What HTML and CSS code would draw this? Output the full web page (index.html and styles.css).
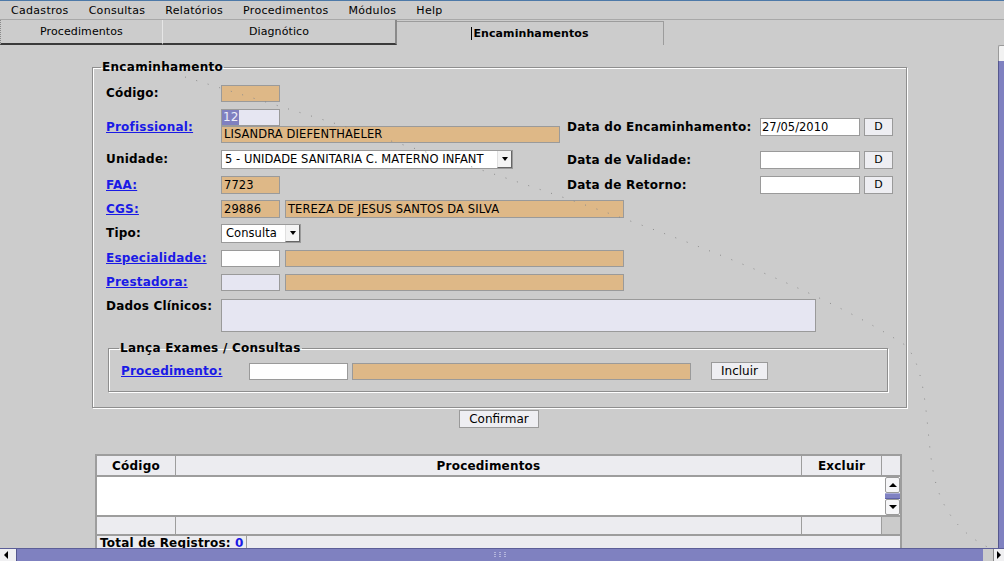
FILE: index.html
```html
<!DOCTYPE html>
<html lang="pt">
<head>
<meta charset="utf-8">
<title>Encaminhamentos</title>
<link rel="stylesheet" href="styles.css">
</head>
<body>
<div class="app">
  <div class="menubar">
    <span class="menu-item">Cadastros</span>
    <span class="menu-item">Consultas</span>
    <span class="menu-item">Relatórios</span>
    <span class="menu-item">Procedimentos</span>
    <span class="menu-item">Módulos</span>
    <span class="menu-item">Help</span>
  </div>
  <div class="tabs">
    <div class="tab tab-1">Procedimentos</div>
    <div class="tab tab-2">Diagnótico</div>
    <div class="tab tab-3"><span class="caret"></span>Encaminhamentos</div>
  </div>
  <div class="viewport">
    <div class="main">
      <fieldset class="group main-group">
        <legend>Encaminhamento</legend>
        <div class="form">
          <div class="row r-codigo">
            <div class="lbl">Código:</div>
            <div class="fld w-s"></div>
          </div>
          <div class="row r-prof">
            <div class="lbl lbl-mid"><a class="lnk" href="#">Profissional:</a></div>
            <div class="left">
              <div class="stack">
                <div class="fld w-s lav nopad"><span class="seltext">12</span></div>
                <div class="fld w-l">LISANDRA DIEFENTHAELER</div>
              </div>
            </div>
            <div class="right mid">
              <div class="rlbl">Data do Encaminhamento:</div>
              <div class="date">27/05/2010</div>
              <button class="btn dbtn">D</button>
            </div>
          </div>
          <div class="row r-unid">
            <div class="lbl lbl-19">Unidade:</div>
            <div class="left">
              <div class="select w-unid">
                <span class="select-text">5 - UNIDADE SANITARIA C. MATERNO INFANT</span>
                <span class="select-arrow"></span>
              </div>
            </div>
            <div class="right mid">
              <div class="rlbl">Data de Validade:</div>
              <div class="date"></div>
              <button class="btn dbtn">D</button>
            </div>
          </div>
          <div class="row r-faa">
            <div class="lbl lbl-18"><a class="lnk" href="#">FAA:</a></div>
            <div class="left">
              <div class="fld w-s h18">7723</div>
            </div>
            <div class="right">
              <div class="rlbl">Data de Retorno:</div>
              <div class="date"></div>
              <button class="btn dbtn">D</button>
            </div>
          </div>
          <div class="row r-cgs">
            <div class="lbl lbl-18"><a class="lnk" href="#">CGS:</a></div>
            <div class="fld w-s h18">29886</div>
            <div class="fld w-l h18 gap5">TEREZA DE JESUS SANTOS DA SILVA</div>
          </div>
          <div class="row r-tipo">
            <div class="lbl lbl-19">Tipo:</div>
            <div class="select w-tipo">
              <span class="select-text">Consulta</span>
              <span class="select-arrow"></span>
            </div>
          </div>
          <div class="row r-esp">
            <div class="lbl"><a class="lnk" href="#">Especialidade:</a></div>
            <div class="fld w-s white"></div>
            <div class="fld w-l gap5"></div>
          </div>
          <div class="row r-prest">
            <div class="lbl"><a class="lnk" href="#">Prestadora:</a></div>
            <div class="fld w-s lav"></div>
            <div class="fld w-l gap5"></div>
          </div>
          <div class="row r-dados">
            <div class="lbl lbl-top">Dados Clínicos:</div>
            <div class="area"></div>
          </div>
          <fieldset class="group sub-group">
            <legend>Lança Exames / Consultas</legend>
            <div class="proc-row">
              <a class="lnk proc-lnk" href="#">Procedimento:</a>
              <div class="fld proc-code white"></div>
              <div class="fld w-l gap4"></div>
              <button class="btn btn-incluir">Incluir</button>
            </div>
          </fieldset>
        </div>
      </fieldset>
      <div class="confirm-row"><button class="btn btn-confirm">Confirmar</button></div>
      <div class="table">
        <div class="t-head">
          <div class="c c1">Código</div>
          <div class="c c2">Procedimentos</div>
          <div class="c c3">Excluir</div>
          <div class="c c4"></div>
        </div>
        <div class="t-body">
          <div class="t-rows"></div>
          <div class="t-vscroll">
            <div class="sb-btn sb-up"></div>
            <div class="sb-thumb"></div>
            <div class="sb-btn sb-down"></div>
          </div>
        </div>
        <div class="t-foot">
          <div class="c c1"></div>
          <div class="c c2"></div>
          <div class="c c3"></div>
          <div class="c c4 blank"></div>
        </div>
        <div class="t-total"><span class="total-text">Total de Registros: <span class="count">0</span></span></div>
      </div>
    </div>
    <div class="vscroll">
      <div class="vs-btn"></div>
      <div class="vs-thumb"></div>
    </div>
  </div>
  <div class="hscroll">
    <div class="hs-btn hs-left"></div>
    <div class="hs-thumb">
      <svg class="grip" width="13" height="6" viewBox="0 0 13 6">
        <rect x="0" y="0" width="2" height="1" fill="#b4b6dc"/><rect x="5" y="0" width="2" height="1" fill="#b4b6dc"/><rect x="10" y="0" width="2" height="1" fill="#b4b6dc"/>
        <rect x="0" y="2" width="2" height="1" fill="#b4b6dc"/><rect x="5" y="2" width="2" height="1" fill="#b4b6dc"/><rect x="10" y="2" width="2" height="1" fill="#b4b6dc"/>
        <rect x="0" y="4" width="2" height="1" fill="#b4b6dc"/><rect x="5" y="4" width="2" height="1" fill="#b4b6dc"/><rect x="10" y="4" width="2" height="1" fill="#b4b6dc"/>
      </svg>
    </div>
    <div class="hs-gap"></div>
    <div class="hs-btn hs-right"></div>
  </div>
</div>
<svg class="artifact" width="1004" height="561" viewBox="0 0 1004 561">
  <path d="M185,77 C420,150 760,250 905,345 C930,370 925,440 935,480 C945,520 970,540 996,551" fill="none" stroke="#8c8c8c" stroke-width="1" stroke-dasharray="1 11"/>
</svg>
</body>
</html>
```

FILE: styles.css
```css
* { box-sizing: border-box; }
html, body { margin: 0; padding: 0; }
body {
  width: 1004px;
  height: 561px;
  overflow: hidden;
  position: relative;
  background: #cccccc;
  color: #000;
  font-family: "DejaVu Sans", "Noto Sans", sans-serif;
  font-size: 11px;
}
.app { display: flex; flex-direction: column; height: 561px; }

/* menu */
.menubar {
  flex: none;
  height: 19px;
  border-top: 1px solid #4d79a8;
  display: flex;
  align-items: center;
  padding-left: 1px;
}
.menu-item { padding: 0 10px; line-height: 17px; letter-spacing: 0.3px; }

/* tabs */
.tabs {
  flex: none;
  height: 26px;
  display: flex;
  border-top: 1px solid #a8a8a8;
}
.tab {
  display: flex;
  align-items: center;
  justify-content: center;
  height: 25px;
  padding-bottom: 1px;
  letter-spacing: 0.1px;
}
.tab-1 {
  width: 163px;
  border-left: 1px dotted #8a8a8a;
  border-right: 1px solid #e6e6e6;
  border-bottom: 2px solid #3a3a3a;
}
.tab-2 {
  width: 234px;
  border-right: 2px solid #8a8a8a;
  border-bottom: 2px solid #3a3a3a;
}
.tab-3 {
  width: 267px;
  margin-top: 1px;
  height: 24px;
  border-top: 1px solid #9c9c9c;
  border-right: 1px solid #9c9c9c;
  font-weight: bold;
}
.caret { display: inline-block; width: 1px; height: 13px; background: #000; margin-right: 1px; }

/* viewport */
.viewport { flex: 1; display: flex; min-height: 0; }
.main { width: 998px; flex: none; overflow: hidden; }

.group {
  margin: 0;
  padding: 0;
  border: 1px solid #8e8e8e;
  box-shadow: inset 1px 1px 0 #ffffff, 1px 1px 0 #ffffff;
  min-width: 0;
}
.group legend {
  font-weight: bold;
  font-size: 12px;
  line-height: 14px;
  padding: 0 1px;
  letter-spacing: 0.3px;
}
.main-group {
  margin: 15px 0 0 92px;
  width: 815px;
  padding-bottom: 15px;
}
.main-group > legend { margin-left: 8px; }

.form {
  padding: 11px 0 0 13px;
  display: flex;
  flex-direction: column;
}
.row { display: flex; align-items: flex-start; margin-bottom: 6px; }
.r-codigo { height: 18px; }
.r-prof { height: 35px; }
.r-unid { height: 20px; }
.r-faa { height: 18px; }
.r-cgs { height: 18px; }
.r-tipo { height: 20px; }
.r-esp { height: 18px; }
.r-prest { height: 19px; }
.r-dados { height: 33px; margin-bottom: 9px; }

.lbl {
  width: 115px;
  flex: none;
  font-weight: bold;
  font-size: 12px;
  line-height: 17px;
  letter-spacing: 0.2px;
  white-space: nowrap;
}
.lbl-18 { line-height: 18px; }
.lbl-19 { line-height: 19px; }
.lbl-mid { align-self: center; padding-top: 1px; }
.lbl-top { line-height: 14px; }
.lnk { color: #1a1ae6; text-decoration: underline; font-weight: bold; }

.left { width: 346px; flex: none; }
.stack { display: flex; flex-direction: column; }
.right { display: flex; align-items: center; }
.right.mid { align-self: center; }
.rlbl {
  width: 193px;
  font-weight: bold;
  font-size: 12px;
  letter-spacing: 0.25px;
  white-space: nowrap;
}
.date {
  width: 100px;
  height: 18px;
  background: #fff;
  border: 1px solid #9a9a9a;
  padding: 0 1px;
  font-size: 11.5px;
  line-height: 16px;
  margin-right: 4px;
}

.fld {
  flex: none;
  height: 17px;
  border: 1px solid #9a9a9a;
  background: #deb887;
  font-size: 11.5px;
  line-height: 15px;
  padding: 0 2px;
  white-space: nowrap;
  overflow: hidden;
  letter-spacing: 0.1px;
}
.fld.h18 { height: 18px; line-height: 16px; }
.w-s { width: 59px; }
.w-l { width: 339px; }
.gap5 { margin-left: 5px; }
.gap4 { margin-left: 4px; }
.fld.white { background: #ffffff; }
.fld.lav { background: #e6e6f2; }
.fld.nopad { padding: 0; }
.seltext {
  display: inline-block;
  height: 15px;
  padding: 0 1px 0 1px;
  background: #8080c0;
  color: #eeeefa;
  font-size: 12px;
}

.select {
  display: flex;
  height: 19px;
  border: 1px solid #9a9a9a;
  background: #fff;
  font-size: 11.5px;
}
.w-unid { width: 292px; }
.w-tipo { width: 80px; }
.select-text {
  flex: 1;
  padding-left: 3px;
  line-height: 17px;
  white-space: nowrap;
  overflow: hidden;
  letter-spacing: 0.05px;
}
.w-tipo .select-text { padding-left: 4px; font-size: 11.5px; }
.select-arrow {
  flex: none;
  width: 15px;
  height: 17px;
  background: #f4f4f4;
  border-left: 1px solid #e0e0e0;
  border-right: 1px solid #666;
  border-bottom: 1px solid #666;
  display: flex;
  align-items: center;
  justify-content: center;
}
.select-arrow::after {
  content: "";
  border-left: 3px solid transparent;
  border-right: 3px solid transparent;
  border-top: 4px solid #000;
}

.area {
  width: 595px;
  height: 33px;
  background: #e6e6f2;
  border: 1px solid #9a9a9a;
}

.btn {
  font-family: "DejaVu Sans", "Noto Sans", sans-serif;
  font-size: 12px;
  color: #000;
  background: #eeeef2;
  border: 1px solid #9a9a9a;
  padding: 0;
  height: 18px;
  line-height: 16px;
  border-radius: 0;
}
.dbtn { width: 29px; font-size: 11px; }
.btn-incluir { width: 57px; margin-left: 20px; }
.btn-confirm { width: 80px; }

.sub-group {
  margin-left: 2px;
  width: 780px;
  padding: 7px 0 11px 0;
}
.sub-group > legend { margin-left: 10px; letter-spacing: 0.25px; }
.proc-row { display: flex; align-items: center; height: 18px; padding-left: 12px; }
.proc-lnk { width: 128px; flex: none; font-size: 12px; letter-spacing: 0.2px; }
.proc-code { width: 99px; }

.confirm-row { display: flex; justify-content: center; margin-top: 2px; }

/* table */
.table {
  margin: 26px 0 0 95px;
  width: 807px;
  border: 2px solid #9d9d9d;
  border-bottom: none;
  background: #ececf0;
}
.t-head, .t-foot { display: flex; height: 21px; border-bottom: 2px solid #9d9d9d; }
.t-foot { height: 19px; }
.c { border-right: 1px solid #9d9d9d; height: 100%; display: flex; align-items: center; justify-content: center; font-weight: bold; font-size: 12px; letter-spacing: 0.2px; }
.c1 { width: 79px; }
.c2 { width: 626px; }
.c3 { width: 80px; }
.c4 { flex: 1; border-right: none; }
.c4.blank { background: #cbcbcb; }
.t-body { display: flex; height: 40px; border-bottom: 2px solid #9d9d9d; background: #fff; }
.t-rows { flex: 1; }
.t-vscroll { width: 15px; display: flex; flex-direction: column; }
.sb-btn {
  height: 16px;
  background: #f6f6f8;
  border: 1px solid #9a9a9a;
  border-radius: 2px;
  display: flex;
  align-items: center;
  justify-content: center;
}
.sb-up::after { content: ""; border-left: 4px solid transparent; border-right: 4px solid transparent; border-bottom: 4px solid #000; }
.sb-down::after { content: ""; border-left: 4px solid transparent; border-right: 4px solid transparent; border-top: 4px solid #000; }
.sb-thumb { height: 6px; background: #8082c2; border-top: 1px solid #aaacd8; border-bottom: 1px solid #5f62a8; }
.t-total { height: 20px; padding-left: 3px; font-weight: bold; font-size: 12px; letter-spacing: 0.2px; line-height: 15px; }
.total-text { border-right: 1px solid #9d9d9d; padding-right: 2px; display: inline-block; }
.count { color: #1a1ae6; }

/* scrollbars */
.vscroll { width: 6px; flex: none; display: flex; flex-direction: column; }
.vs-btn { height: 16px; background: #f2f2f2; border-top: 1px solid #9a9a9a; border-left: 1px solid #9a9a9a; border-top-left-radius: 2px; }
.vs-thumb { flex: 1; background: #7f81c0; border-left: 1px solid #55578e; }

.hscroll { flex: none; height: 13px; display: flex; border-top: 1px solid #5c5e98; }
.hs-btn { background: #f0f0f2; display: flex; align-items: center; justify-content: center; }
.hs-left { width: 17px; border-right: 1px solid #55578e; }
.hs-left::after { content: ""; border-top: 4px solid transparent; border-bottom: 4px solid transparent; border-right: 4px solid #000; margin-right: 4px; }
.hs-thumb { width: 966px; background: #7f81c0; display: flex; align-items: center; justify-content: center; }
.hs-gap { width: 10px; background: #cccccc; }
.hs-right { flex: 1; border-left: 1px solid #888; }
.hs-right::after { content: ""; border-top: 4px solid transparent; border-bottom: 4px solid transparent; border-left: 4px solid #000; }

.artifact { position: absolute; left: 0; top: 0; pointer-events: none; }
```
